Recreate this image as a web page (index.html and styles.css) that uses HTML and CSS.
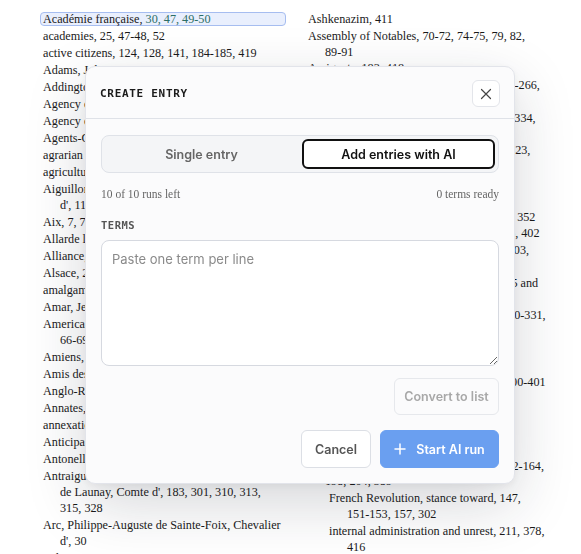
FILE: index.html
```html
<!DOCTYPE html>
<html lang="en">
<head>
    <meta charset="UTF-8">
    <meta name="viewport" content="width=device-width, initial-scale=1.0">
    <title>Index</title>
    <link rel="stylesheet" href="styles.css">
</head>
<body>
    <!-- Index columns behind the dialog -->
    <div class="index">
        <ul class="column">
            <li class="entry current">Académie française, <span class="pages">30, 47, 49-50</span></li>
            <li class="entry">academies, 25, 47-48, 52</li>
            <li class="entry">active citizens, 124, 128, 141, 184-185, 419</li>
            <li class="entry">Adams, John, 66, 68</li>
            <li class="entry">Addington, Henry, 389</li>
            <li class="entry">Agency of Commerce, 212</li>
            <li class="entry">Agency of Mines, 212</li>
            <li class="entry">Agents-General, 39</li>
            <li class="entry">agrarian law, 235, 287</li>
            <li class="entry">agriculture, 14-17, 196</li>
            <li class="entry">Aiguillon, Emmanuel-Armand de Vignerot, Duc d', 115, 120</li>
            <li class="entry">Aix, 7, 72, 303</li>
            <li class="entry">Allarde law, 141</li>
            <li class="entry">Alliance, Treaty of, 67</li>
            <li class="entry">Alsace, 23, 167</li>
            <li class="entry">amalgame, 244</li>
            <li class="entry">Amar, Jean-Pierre, 260</li>
            <li class="entry">American Revolution, 50, 52, 57, 61, 63-64, <span class="nb">66-69</span></li>
            <li class="entry">Amiens, Peace of, 389</li>
            <li class="entry">Amis des Noirs, 153</li>
            <li class="entry">Anglo-Russian alliance, 380</li>
            <li class="entry">Annates, 131</li>
            <li class="entry">annexations, 226, 347</li>
            <li class="entry">Anticipations, 65</li>
            <li class="entry">Antonelle, Pierre-Antoine, 327</li>
            <li class="entry">Antraigues, Emmanuel-Henri-Louis-Alexandre de Launay, Comte d', 183, 301, 310, 313, 315, 328</li>
            <li class="entry">Arc, Philippe-Auguste de Sainte-Foix, Chevalier d', 30</li>
            <li class="entry">Arles, 183, 329, 337</li>
        </ul>
        <ul class="column right">
            <li class="entry">Ashkenazim, 411</li>
            <li class="entry">Assembly of Notables, 70-72, 74-75, 79, 82, <span class="nb">89-91</span></li>
            <li class="entry">Assignats, 183, 418</li>
            <li class="entry">Austria, 143, 167, 198, 204, 243, 262, 265-266, 297, 330</li>
            <li class="entry">Avignon, 9, 165, 177, 194, 231, 233, 235, 334, 345-346</li>
            <li class="entry">Babeuf, Gracchus, 8, 283, 287, 317, 321-323, 327-328</li>
            <li class="entry">bailliages, 87, 89</li>
            <li class="entry">Barbaroux, Charles, 208</li>
            <li class="entry">Barère, Bertrand, 234, 247, 265, 276, 344, 352</li>
            <li class="entry">Barnave, Antoine, 147, 175, 178, 185, 398, 402</li>
            <li class="entry">Barras, Paul, 4, 294, 301, 325, 331, 345, 403, 405-406</li>
            <li class="entry">Bastille, fall of, 99, 104, 108-110, 112, 115 and after</li>
            <li class="entry">Batavian Republic, 299, 310, 318, 322, 330-331, 345-346</li>
            <li class="entry">Bayonne, 153</li>
            <li class="entry">Belgium, 199, 226</li>
            <li class="entry">Bernadotte, Jean, 7, 370, 385, 392, 398, 400-401</li>
            <li class="entry">Billaud-Varenne, 248</li>
            <li class="entry">Bonaparte, Napoleon, 330, 345</li>
            <li class="entry">Bouillé, Marquis de, 177</li>
            <li class="entry">Breton Club, 112</li>
            <li class="entry">Britain, 43, 66, 88, 141, 147, 152, 157, 162-164, 198, 204, 389</li>
            <li class="sub">French Revolution, stance toward, 147, <span class="nb">151-153</span>, 157, 302</li>
            <li class="sub">internal administration and unrest, 211, 378, 416</li>
        </ul>
    </div>

    <!-- Create entry dialog -->
    <div class="overlay">
        <div class="modal">
            <div class="modal-header">
                <h2 class="modal-title">CREATE ENTRY</h2>
                <button class="close-btn" aria-label="Close">
                    <svg width="12" height="12" viewBox="0 0 12 12">
                        <path d="M1.5 1.5 L10.5 10.5 M10.5 1.5 L1.5 10.5" stroke="#444" stroke-width="1.2" stroke-linecap="round"/>
                    </svg>
                </button>
            </div>
            <div class="modal-body">
                <div class="tabs">
                    <button class="tab">Single entry</button>
                    <button class="tab active">Add entries with AI</button>
                </div>
                <div class="meta">
                    <span>10 of 10 runs left</span>
                    <span>0 terms ready</span>
                </div>
                <label class="field-label">TERMS</label>
                <textarea class="terms" placeholder="Paste one term per line"></textarea>
                <div class="convert-row">
                    <button class="btn convert" disabled>Convert to list</button>
                </div>
                <div class="actions">
                    <button class="btn cancel">Cancel</button>
                    <button class="btn primary">
                        <svg width="12" height="12" viewBox="0 0 12 12">
                            <path d="M6 1 V11 M1 6 H11" stroke="#fff" stroke-width="1.5" stroke-linecap="round"/>
                        </svg>
                        Start AI run
                    </button>
                </div>
            </div>
        </div>
    </div>
</body>
</html>
```

FILE: styles.css
```css
body {
    margin: 0;
    background: #fff;
    font-family: "Liberation Serif", "Times New Roman", serif;
    color: #1a1a1a;
    overflow: hidden;
    height: 554px;
}

/* Index behind the dialog */
.index {
    display: grid;
    grid-template-columns: 242px 243px;
    column-gap: 23px;
    padding: 12px 0 0 40px;
}

.column {
    list-style: none;
    margin: 0;
    padding: 0;
    font-size: 12.2px;
    line-height: 16px;
}

.column.right {
    line-height: 15.8px;
}

.entry {
    padding-left: 20px;
    text-indent: -17px;
    margin-bottom: 1px;
}

.sub {
    padding-left: 42px;
    text-indent: -18px;
    margin-bottom: 1px;
}

.nb {
    white-space: nowrap;
}

.current {
    padding-left: 19px;
    margin-right: -4px;
    margin-bottom: 2px;
    background: #e9effd;
    border: 1px solid #a6bdf0;
    border-radius: 4px;
    line-height: 12px;
}

.pages {
    color: #2c6e66;
}

/* Dialog */
.overlay {
    position: fixed;
    inset: 0;
    display: flex;
    align-items: flex-start;
    padding: 66px 0 0 85px;
}

.modal {
    width: 430px;
    box-sizing: border-box;
    background: #fbfbfc;
    border: 1px solid #e2e4ea;
    border-radius: 10px;
    box-shadow: 0 20px 60px rgba(30, 35, 50, 0.18), 0 2px 8px rgba(30, 35, 50, 0.06);
    font-family: Inter, "Noto Sans", sans-serif;
}

.modal-header {
    display: flex;
    justify-content: space-between;
    align-items: center;
    padding: 13px 14px 11px 14px;
    border-bottom: 1px solid #dfe2e8;
}

.modal-title {
    margin: 0;
    font-family: "DejaVu Sans Mono", monospace;
    font-size: 11px;
    font-weight: bold;
    letter-spacing: 0.7px;
    color: #1b1b1b;
}

.close-btn {
    width: 28px;
    height: 27px;
    display: flex;
    align-items: center;
    justify-content: center;
    background: #fff;
    border: 1px solid #e3e5ea;
    border-radius: 6px;
    padding: 0;
}

.modal-body {
    padding: 16px 15px 15px 15px;
}

.tabs {
    display: grid;
    grid-template-columns: 1fr 1fr;
    gap: 4px;
    padding: 3px;
    background: #f4f5f7;
    border: 1px solid #dfe2e8;
    border-radius: 8px;
}

.tab {
    height: 30px;
    background: transparent;
    border: 2px solid transparent;
    border-radius: 6px;
    font-family: Inter, sans-serif;
    font-size: 12.5px;
    font-weight: 600;
    color: #666;
}

.tab.active {
    background: #fff;
    border-color: #111;
    color: #111;
}

.meta {
    display: flex;
    justify-content: space-between;
    margin-top: 15px;
    font-family: "Liberation Serif", serif;
    font-size: 11.5px;
    color: #666;
}

.field-label {
    display: block;
    margin-top: 19px;
    font-family: "DejaVu Sans Mono", monospace;
    font-size: 10.5px;
    font-weight: bold;
    letter-spacing: 0.5px;
    color: #555;
}

.terms {
    display: block;
    box-sizing: border-box;
    width: 100%;
    height: 126px;
    margin-top: 9px;
    padding: 10px 10px;
    background: #fff;
    border: 1px solid #d6d9e0;
    border-radius: 8px;
    font-family: Inter, sans-serif;
    font-size: 13px;
    resize: vertical;
}

.terms::placeholder {
    color: #8a8a8a;
}

.convert-row {
    display: flex;
    justify-content: flex-end;
    margin-top: 12px;
}

.btn {
    height: 38px;
    box-sizing: border-box;
    border-radius: 6px;
    font-family: Inter, sans-serif;
    font-size: 12.5px;
    font-weight: 600;
    display: flex;
    align-items: center;
    justify-content: center;
    gap: 10px;
}

.convert {
    width: 105px;
    height: 37px;
    background: #fbfbfc;
    border: 1px solid #e6e8ec;
    color: #a8a8a8;
}

.actions {
    display: flex;
    justify-content: flex-end;
    gap: 9px;
    margin-top: 15px;
}

.cancel {
    width: 70px;
    background: #fff;
    border: 1px solid #dcdfe5;
    color: #555;
}

.primary {
    width: 119px;
    background: #6a9ff0;
    border: 1px solid #6a9ff0;
    color: #fff;
}
```
